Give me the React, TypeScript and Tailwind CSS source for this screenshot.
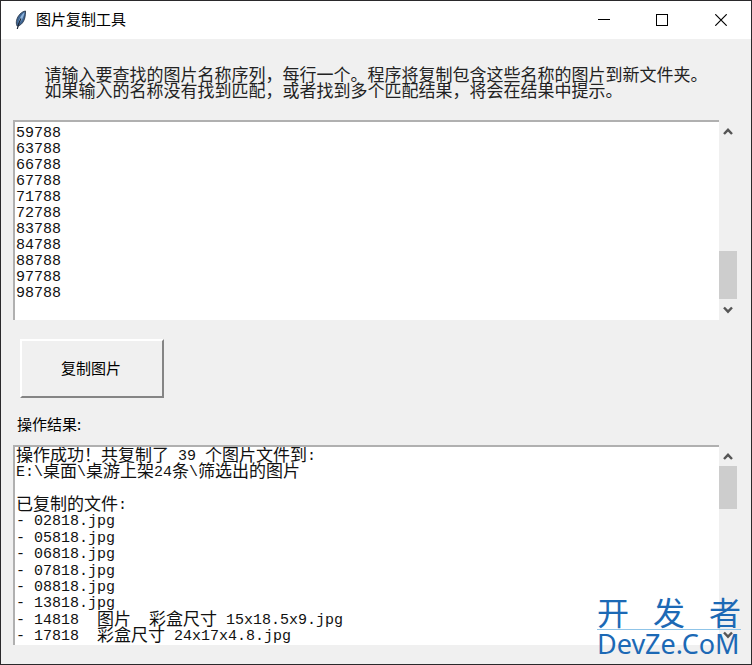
import React, { useState } from "react";

const names = ["59788", "63788", "66788", "67788", "71788", "72788", "83788", "84788", "88788", "97788", "98788"];

const results = [
  "操作成功！共复制了 39 个图片文件到:",
  "E:\\桌面\\桌游上架24条\\筛选出的图片",
  "",
  "已复制的文件:",
  "- 02818.jpg",
  "- 05818.jpg",
  "- 06818.jpg",
  "- 07818.jpg",
  "- 08818.jpg",
  "- 13818.jpg",
  "- 14818  图片  彩盒尺寸 15x18.5x9.jpg",
  "- 17818  彩盒尺寸 24x17x4.8.jpg",
];

function Feather() {
  return (
    <svg viewBox="0 0 14 20" className="h-5 w-3.5" aria-hidden="true">
      <path d="M11.5 1C7.5 1.6 3.8 5.5 2.6 10.2c-.5 2-.3 4 .3 5.6l1.6.2c3-1.3 5.4-4.3 6.3-8 .6-2.500.9-5 .7-7z" fill="#3e6593" stroke="#222e40" strokeWidth=".8" />
      <path d="M10.600 2.300C7.800 4 5.200 8.500 4.300 13.500l1.400-1c2.400-2.500 4-6 4.900-10.200z" fill="#8fb4dc" />
      <path d="M7 8.500C5.500 11 4.300 14 3.300 19" fill="none" stroke="#1b2536" strokeWidth="1.200" />
    </svg>
  );
}

function Chevron({ up = false }: { up?: boolean }) {
  return (
    <svg viewBox="0 0 10 8" className="h-2 w-2.5" fill="none" stroke="#555" strokeWidth="2.4" aria-hidden="true">
      <path d={up ? "M1 7 5 2.800l4 4.200" : "M1 1.500 5 5.700l4-4.200"} />
    </svg>
  );
}

function Scrollbar({ atEnd = false }: { atEnd?: boolean }) {
  return (
    <div className="flex w-5 shrink-0 flex-col pr-0.5">
      <button type="button" aria-label="向上滚动" className="flex h-[21px] items-center justify-center">
        <Chevron up />
      </button>
      <div className={`flex flex-1 flex-col ${atEnd ? "justify-end" : "justify-start"}`}>
        <div className={`bg-[#cdcdcd] ${atEnd ? "h-12" : "h-[43px]"}`} />
      </div>
      <button type="button" aria-label="向下滚动" className="flex h-[21px] items-center justify-center">
        <Chevron />
      </button>
    </div>
  );
}

function ResultLine({ text }: { text: string }) {
  const parts = text.split(/([\u3000-\u9fff\uff00-\uffef]+)/);
  return (
    <div className="flex h-4 items-center">
      {parts.map((part, i) => (
        <span key={i} className={i % 2 ? "text-[17px]" : "text-[15px]"}>{part}</span>
      ))}
    </div>
  );
}

export default function App() {
  const [value, setValue] = useState(names.join("\n") + "\n");
  return (
    <div className="relative flex min-h-screen flex-col border border-[#2a292b] bg-[#f0f0f0] font-['Noto_Sans_CJK_SC',sans-serif] text-[15px] text-black">
      <header className="flex h-[38px] items-center bg-white pl-[13px]">
        <Feather />
        <h1 className="flex-1 pb-0.5 pl-2 leading-5">图片复制工具</h1>
        <div className="flex h-full">
          <button type="button" aria-label="最小化" className="flex w-[58px] items-center justify-center">
            <svg viewBox="0 0 12 12" className="size-3" stroke="#000" shapeRendering="crispEdges"><path d="M0 5.500h12" /></svg>
          </button>
          <button type="button" aria-label="最大化" className="flex w-[58px] items-center justify-center">
            <svg viewBox="0 0 12 12" className="size-3" fill="none" stroke="#000" shapeRendering="crispEdges"><path d="M.5.5h11v11H.5z" /></svg>
          </button>
          <button type="button" aria-label="关闭" className="flex w-[60px] items-center justify-center">
            <svg viewBox="0 0 12 12" className="size-3" stroke="#000" strokeWidth="1.200"><path d="m.3.300 11.400 11.400M11.700.300.300 11.700" /></svg>
          </button>
        </div>
      </header>

      <main className="flex flex-1 flex-col px-3">
        <label htmlFor="names" className="mt-[27px] self-center text-[17px] leading-4 text-[#222]">
          请输入要查找的图片名称序列，每行一个。程序将复制包含这些名称的图片到新文件夹。
          <br />
          如果输入的名称没有找到匹配，或者找到多个匹配结果，将会在结果中提示。
        </label>

        <div className="mt-[22px] flex h-[200px]">
          <textarea
            id="names"
            value={value}
            onChange={(e) => setValue(e.target.value)}
            spellCheck={false}
            className="min-w-0 flex-1 resize-none overflow-hidden border-l-2 border-t-2 border-[#b0b0b0] bg-white pl-px pt-1 font-['Liberation_Mono','Noto_Sans_CJK_SC',monospace] leading-4 text-[#111] outline-none"
          />
          <Scrollbar atEnd />
        </div>

        <button type="button" className="ml-[7px] mt-[19px] h-[59px] w-36 border-2 border-b-[#858585] border-l-white border-r-[#858585] border-t-white pb-0.5 pr-0.5 leading-5">
          复制图片
        </button>

        <label htmlFor="result" className="ml-1 mt-4 leading-5">操作结果:</label>

        <div className="mt-[11px] flex h-[200px]">
          <output id="result" className="flex min-w-0 flex-1 flex-col justify-between overflow-hidden whitespace-pre border-l-2 border-t-2 border-[#b0b0b0] bg-white pl-px pt-0.5 font-['Liberation_Mono','Noto_Sans_CJK_SC',monospace] leading-4 text-[#111]">
            {results.map((line, i) => <ResultLine key={i} text={line} />)}
          </output>
          <Scrollbar />
        </div>
      </main>

      <div className="pointer-events-none absolute bottom-1.5 right-2.5 w-36 text-[#1c69b5]">
        <div className="mb-0.5 flex justify-between text-[32px] leading-8">
          <span>开</span><span>发</span><span>者</span>
        </div>
        <div className="h-px bg-[#8fc4e8]" />
        <div className="font-['Noto_Sans',sans-serif] text-[27px] leading-7">DevZe.CoM</div>
      </div>
    </div>
  );
}
